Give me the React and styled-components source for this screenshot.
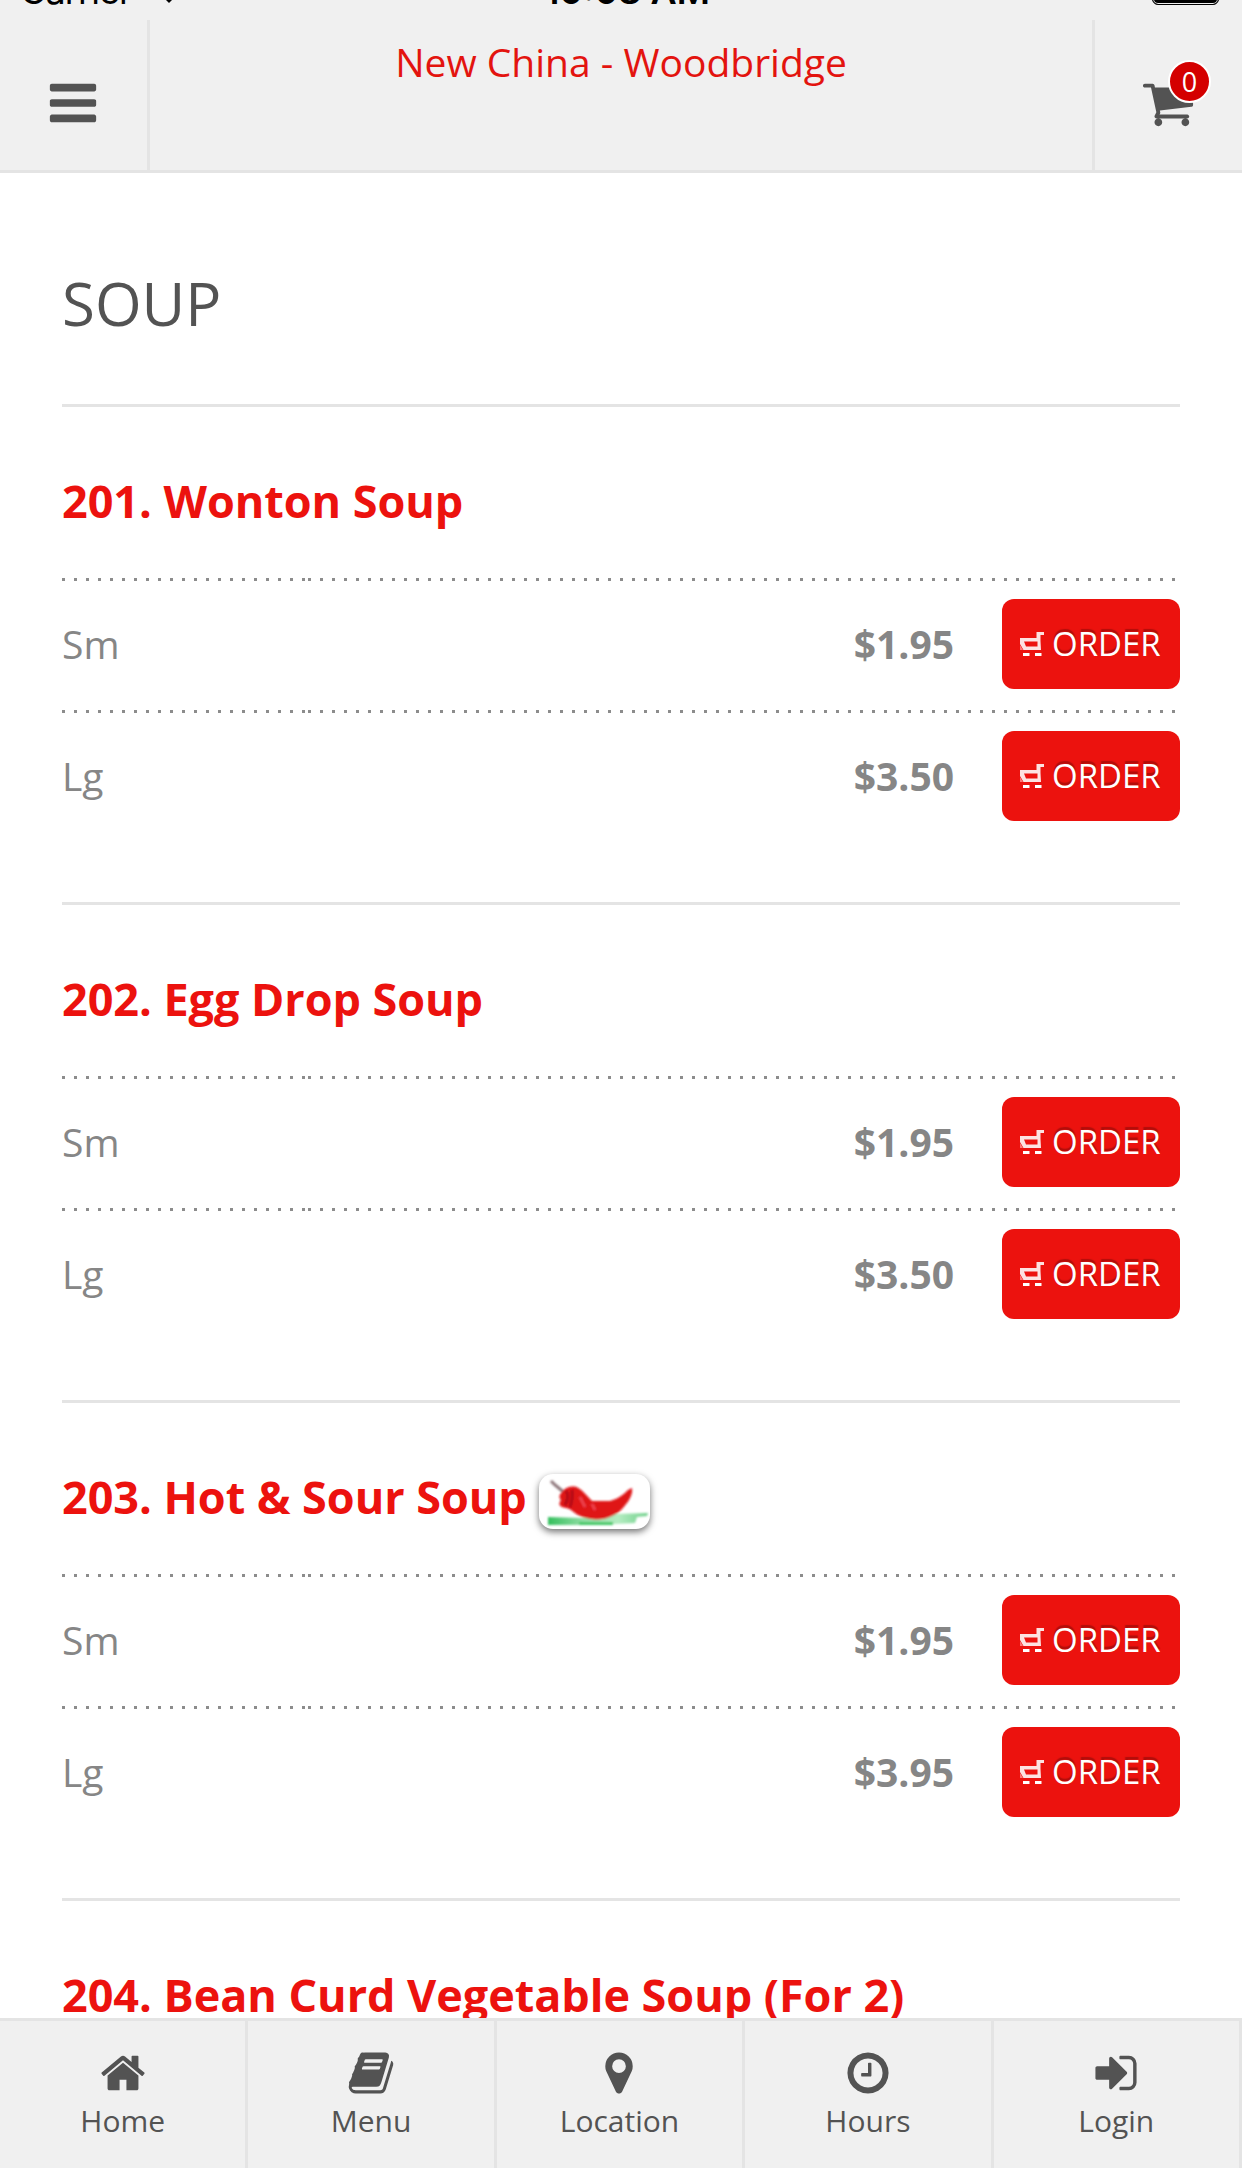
import React from 'react';
import styled, { createGlobalStyle } from 'styled-components';

const GlobalStyle = createGlobalStyle`
    * {
        box-sizing: border-box;
    }

    body {
        margin: 0;
        background: #fff;
        font-family: "Open Sans", sans-serif;
        color: #535353;
        overflow: hidden;
    }
`;

const ICONS = {
    bars: 'M1664 1344v128q0 26-19 45t-45 19h-1408q-26 0-45-19t-19-45v-128q0-26 19-45t45-19h1408q26 0 45 19t19 45zm0-512v128q0 26-19 45t-45 19h-1408q-26 0-45-19t-19-45v-128q0-26 19-45t45-19h1408q26 0 45 19t19 45zm0-512v128q0 26-19 45t-45 19h-1408q-26 0-45-19t-19-45v-128q0-26 19-45t45-19h1408q26 0 45 19t19 45z',
    cart: 'M704 1536q0 52-38 90t-90 38-90-38-38-90 38-90 90-38 90 38 38 90zm896 0q0 52-38 90t-90 38-90-38-38-90 38-90 90-38 90 38 38 90zm128-1088v512q0 24-16.5 42.5t-40.5 21.5l-1044 122q13 60 13 70 0 16-24 64h920q26 0 45 19t19 45-19 45-45 19h-1024q-26 0-45-19t-19-45q0-11 8-31.5t16-36 21.5-40 15.5-29.5l-177-823h-204q-26 0-45-19t-19-45 19-45 45-19h256q16 0 28.5 6.5t19.5 15.5 13 24.5 8 26 5.5 29.5 4.5 26h1201q26 0 45 19t19 45z',
    home: 'M1472 992v480q0 26-19 45t-45 19h-384v-384h-256v384h-384q-26 0-45-19t-19-45v-480q0-1 .5-3t.5-3l575-474 575 474q1 2 1 6zm223-69l-62 74q-8 9-21 11h-3q-13 0-21-7l-692-577-692 577q-12 8-24 7-13-2-21-11l-62-74q-8-10-7-23.5t11-21.5l719-599q32-26 76-26t76 26l244 204v-195q0-14 9-23t23-9h192q14 0 23 9t9 23v408l219 182q10 8 11 21.5t-7 23.5z',
    book: 'M1703 478q40 57 18 129l-275 906q-19 64-76.5 107.5t-122.5 43.5h-923q-77 0-148.5-53.5t-99.5-131.5q-24-67-2-127 0-4 3-27t4-37q1-8-3-21.5t-3-19.5q2-11 8-21t16.5-23.5 16.5-23.5q23-38 45-91.5t30-91.5q3-10 .5-30t-.5-28q3-11 17-28t17-23q21-36 42-92t25-90q1-9-2.5-32t.5-28q4-13 22-30.5t22-22.5q19-26 42.5-84.5t27.5-96.5q1-8-3-25.5t-2-26.5q2-8 9-18t18-23 17-21q8-12 16.5-30.5t15-35 16-36 19.5-32 26.5-23.5 36-11.5 47.5 5.5l-1 3q38-9 51-9h761q74 0 114 56t18 130l-274 906q-36 119-71.5 153.5t-128.5 34.5h-869q-27 0-38 15-11 16-1 43 24 70 144 70h923q29 0 56-15.5t35-41.5l300-987q7-22 5-57 38 15 59 43zm-1064 2q-4 13 2 22.5t20 9.5h608q13 0 25.5-9.5t16.5-22.5l21-64q4-13-2-22.5t-20-9.5h-608q-13 0-25.5 9.5t-16.5 22.5zm-83 256q-4 13 2 22.5t20 9.5h608q13 0 25.5-9.5t16.5-22.5l21-64q4-13-2-22.5t-20-9.5h-608q-13 0-25.5 9.5t-16.5 22.5z',
    marker: 'M1152 640q0-106-75-181t-181-75-181 75-75 181 75 181 181 75 181-75 75-181zm256 0q0 109-33 179l-364 774q-16 33-47.5 52t-67.5 19-67.5-19-46.5-52l-365-774q-33-70-33-179 0-212 150-362t362-150 362 150 150 362z',
    clock: 'M1024 544v448q0 14-9 23t-23 9h-320q-14 0-23-9t-9-23v-64q0-14 9-23t23-9h224v-352q0-14 9-23t23-9h64q14 0 23 9t9 23zm416 352q0-148-73-273t-198-198-273-73-273 73-198 198-73 273 73 273 198 198 273 73 273-73 198-198 73-273zm224 0q0 209-103 385.5t-279.5 279.5-385.5 103-385.5-103-279.5-279.5-103-385.5 103-385.5 279.5-279.5 385.5-103 385.5 103 279.5 279.5 103 385.5z',
    signIn: 'M1312 896q0 26-19 45l-544 544q-19 19-45 19t-45-19-19-45v-288h-448q-26 0-45-19t-19-45v-384q0-26 19-45t45-19h448v-288q0-26 19-45t45-19 45 19l544 544q19 19 19 45zm352-352v704q0 119-84.5 203.5t-203.5 84.5h-320q-13 0-22.5-9.5t-9.5-22.5q0-4-1-20t-.5-26.5 3-23.5 10-19.5 20.5-6.5h320q66 0 113-47t47-113v-704q0-66-47-113t-113-47h-312l-11.5-1-11.5-3-8-5.5-7-9-2-13.5q0-4-1-20t-.5-26.5 3-23.5 10-19.5 20.5-6.5h320q119 0 203.5 84.5t84.5 203.5z',
};

const MENU = [
    { name: '201. Wonton Soup', prices: [['Sm', '$1.95'], ['Lg', '$3.50']] },
    { name: '202. Egg Drop Soup', prices: [['Sm', '$1.95'], ['Lg', '$3.50']] },
    { name: '203. Hot & Sour Soup', spicy: true, prices: [['Sm', '$1.95'], ['Lg', '$3.95']] },
    { name: '204. Bean Curd Vegetable Soup (For 2)', prices: [] },
];

const TABS = [
    ['home', 'Home'],
    ['book', 'Menu'],
    ['marker', 'Location'],
    ['clock', 'Hours'],
    ['signIn', 'Login'],
];

function Icon({ name, size }) {
    return (
        <Svg viewBox="0 0 1792 1792" width={size} height={size}>
            <path d={ICONS[name]} />
        </Svg>
    )
}

function SmallCart() {
    return (
        <Svg viewBox="0 0 24 24" width="24" height="24">
            <path d="M16.5 0H24V3H20.5V9L21 18H3.5L0 12V6H16.5Z" fill="#fff" fillOpacity="0.88" />
            <path d="M4 9.5H17.5V14.5H6Z" fill="#ec120e" />
            <path d="M0 13L3 18H0Z" fill="#f77" />
            <path d="M3 21H9.5V24H3ZM15 21H21.5V24H15Z" fill="#fff" />
        </Svg>
    )
}

function Chili() {
    return (
        <ChiliCard>
            <Svg viewBox="0 0 111 55" width="111" height="55">
                <defs>
                    <linearGradient id="grass" x1="0" x2="1">
                        <stop offset="0" stopColor="#35bf5d" />
                        <stop offset="0.35" stopColor="#8fdda3" />
                        <stop offset="0.7" stopColor="#b4ecc1" />
                        <stop offset="1" stopColor="#6fd08a" />
                    </linearGradient>
                    <filter id="soft" x="-10%" y="-10%" width="120%" height="120%">
                        <feGaussianBlur stdDeviation="1.2" />
                    </filter>
                </defs>
                <g filter="url(#soft)">
                    <path d="M9 43L42 44L74 40L109 39L108 42L98 43L96 49L58 51L9 51Z" fill="url(#grass)" />
                    <path d="M40 48H74V51H40Z" fill="#42c765" />
                    <path d="M12 7L16 11L27 20" fill="none" stroke="#8b7378" strokeWidth="3" />
                    <path d="M23 18C25 14 31 12 36 12.5C43 15 47 21 53 27L71 27C79 25 85 20 89 16L93 14C94 19 91 25 88 29C84 34 80 39 75 41C69 44 64 45.5 57 45.5C50 45 44 43.5 39 41C34 38 32 35 27 34C20 33 19 30 22 26C19 23 21 20 23 18Z" fill="#df1218" />
                    <path d="M27 17Q31 22 26 31M33 16Q34 25 31 33" fill="none" stroke="#a80d17" strokeWidth="2.5" />
                    <path d="M41 23L46 33M53 30L56 36" fill="none" stroke="#ee4a52" strokeWidth="2.5" />
                </g>
            </Svg>
        </ChiliCard>
    )
}

function App() {
    return (
        <Page>
            <GlobalStyle />
            <Header>
                <StatusBar>
                    <Carrier>
                        Carrier
                        <Svg viewBox="0 0 36 26" width="36" height="26">
                            <path d="M0 8Q18-8 36 8L18 26Z" />
                        </Svg>
                    </Carrier>
                    <Clock>10:08 AM</Clock>
                    <Battery />
                </StatusBar>
                <Toolbar>
                    <ToolButton $side="left"><Icon name="bars" size={54} /></ToolButton>
                    <Restaurant>New China - Woodbridge</Restaurant>
                    <ToolButton $side="right">
                        <Icon name="cart" size={54} />
                        <Badge>0</Badge>
                    </ToolButton>
                </Toolbar>
            </Header>

            <Content>
                <Category>SOUP</Category>
                {MENU.map(item => (
                    <Item key={item.name}>
                        <ItemName>{item.name}{item.spicy && <Chili />}</ItemName>
                        {item.prices.map(([size, price]) => (
                            <PriceRow key={size}>
                                <Size>{size}</Size>
                                <Order>
                                    <Price>{price}</Price>
                                    <OrderButton><SmallCart /><span>ORDER</span></OrderButton>
                                </Order>
                            </PriceRow>
                        ))}
                    </Item>
                ))}
            </Content>

            <TabBar>
                {TABS.map(([icon, label]) => (
                    <Tab key={label}>
                        <Icon name={icon} size={48} />
                        <span>{label}</span>
                    </Tab>
                ))}
            </TabBar>
        </Page>
    )
}

export default App;


const Svg = styled.svg`
    display: block;
    flex-shrink: 0;
    fill: currentColor;
`;

const Page = styled.div`
    display: flex;
    flex-direction: column;
    width: 1242px;
    height: 2168px;
    overflow: hidden;
`;

const Header = styled.header`
    flex: none;
    height: 173px;
    background: #f0f0f0;
    border-bottom: 3px solid #e4e4e4;
`;

/* the bar is scrolled almost out of the top of the screen */
const StatusBar = styled.div`
    display: grid;
    grid-template-columns: 1fr auto 1fr;
    height: 20px;
    overflow: hidden;
    padding: 0 23px 0 20px;
    font-family: Inter, sans-serif;
    font-size: 36px;
    line-height: 36px;
    color: #000;
`;

const Carrier = styled.div`
    display: flex;
    gap: 19px;
    margin-top: -27px;
    letter-spacing: -0.9px;

    svg {
        margin-top: 4px;
    }
`;

const Clock = styled.div`
    margin-top: -27px;
    padding-left: 15px;
    font-weight: 600;
`;

const Battery = styled.div`
    justify-self: end;
    width: 67px;
    height: 29px;
    margin-top: -24px;
    border: 1.5px solid #000;
    border-radius: 6px;
    background: #000;
    box-shadow: inset 0 0 0 1px #f0f0f0;
`;

const Toolbar = styled.div`
    display: flex;
    height: 150px;
`;

const ToolButton = styled.div`
    position: relative;
    display: flex;
    align-items: center;
    justify-content: center;
    width: 150px;
    padding: 15px 1px 0 0;
    border: 0 solid #e4e4e4;
    border-width: ${props => props.$side === 'left' ? '0 3px 0 0' : '0 0 0 3px'};
`;

const Restaurant = styled.div`
    flex: 1;
    padding-top: 15px;
    font-size: 39px;
    line-height: 54px;
    text-align: center;
    color: #e3140f;
`;

const Badge = styled.div`
    position: absolute;
    top: 40px;
    left: 73px;
    width: 43px;
    height: 43px;
    border: 2px solid #fff;
    border-radius: 50%;
    background: #d40000;
    font-size: 27px;
    line-height: 39px;
    text-align: center;
    color: #fff;
`;

const Content = styled.main`
    flex: 1;
    min-height: 0;
    overflow: hidden;
    padding: 0 62px;
`;

const Category = styled.h1`
    height: 231px;
    margin: 0;
    padding-top: 90px;
    font-size: 60px;
    font-weight: 400;
    line-height: 80px;
`;

const Item = styled.section`
    height: 498px;
    border-top: 3px solid #e4e4e4;
`;

const ItemName = styled.h2`
    display: flex;
    align-items: center;
    gap: 12px;
    height: 171px;
    margin: 0;
    padding-top: 16px;
    font-size: 45px;
    font-weight: 700;
    line-height: 60px;
    letter-spacing: -0.05px;
    white-space: nowrap;
    color: #ec120e;
`;

const ChiliCard = styled.span`
    width: 111px;
    height: 55px;
    margin-top: 10px;
    border-radius: 14px;
    background: #fff;
    box-shadow: 0 3px 7px rgba(0, 0, 0, 0.55);
    overflow: hidden;
`;

const PriceRow = styled.div`
    display: flex;
    height: 132px;
    font-size: 39px;
    line-height: 53px;

    > div {
        display: flex;
        align-items: center;
        background: repeating-linear-gradient(90deg, #8c8c8c 0 3px, transparent 3px 12px) top left / 100% 3px no-repeat;
    }
`;

const Size = styled.div`
    width: 246px;
    padding-bottom: 1px;
    color: #868686;
`;

const Order = styled.div`
    flex: 1;
    justify-content: flex-end;
    gap: 48px;
`;

const Price = styled.span`
    padding-bottom: 1px;
    font-weight: 700;
    color: #868686;
`;

const OrderButton = styled.button`
    display: flex;
    align-items: center;
    gap: 8px;
    width: 178px;
    height: 90px;
    padding: 0 0 0 18px;
    border: 0;
    border-radius: 12px;
    background: #ec120e;
    font-family: inherit;
    font-size: 33px;
    line-height: 44px;
    color: #fff;
    text-shadow: 0 -3px 1px rgba(0, 0, 0, 0.25);
`;

const TabBar = styled.nav`
    flex: none;
    display: grid;
    grid-template-columns: repeat(5, 1fr);
    height: 150px;
    background: #f0f0f0;
    border-top: 3px solid #e4e4e4;
`;

const Tab = styled.div`
    display: flex;
    flex-direction: column;
    align-items: center;
    gap: 4px;
    padding-top: 28px;
    border-right: 3px solid #e4e4e4;
    font-size: 30px;
    line-height: 40px;
`;
